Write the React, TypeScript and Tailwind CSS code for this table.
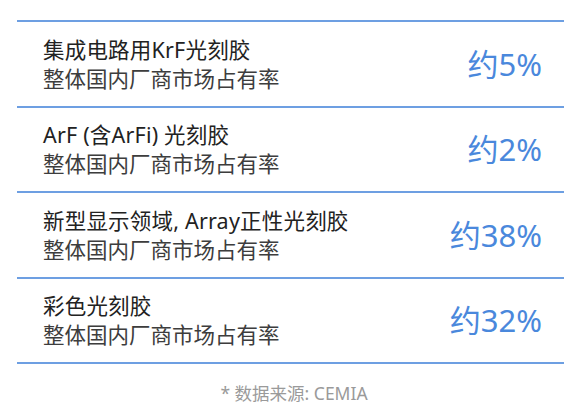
const rows = [
  { title: "集成电路用KrF光刻胶", value: "约5%" },
  { title: "ArF (含ArFi) 光刻胶", value: "约2%" },
  { title: "新型显示领域, Array正性光刻胶", value: "约38%" },
  { title: "彩色光刻胶", value: "约32%" },
];

export default function App() {
  return (
    <div
      className="w-[588px] h-[416px] bg-white pt-[20px]"
      style={{ fontFamily: '"Noto Sans", "Noto Sans CJK SC", sans-serif' }}
    >
      <div className="ml-[17px] w-[547px] border-b-2 border-[#6d9fe2]">
        {rows.map((row, idx) => (
          <div
            key={idx}
            className="h-[85.5px] border-t-2 border-[#6d9fe2] flex items-center justify-between pl-[26px] pr-[22px]"
          >
            <div className="flex flex-col">
              <span className="text-[21.5px] leading-[29px] text-[#222222] tracking-[0.2px]">{row.title}</span>
              <span className="text-[21.5px] leading-[29px] text-[#3d3d3d]">整体国内厂商市场占有率</span>
            </div>
            <span className="text-[31px] text-[#4a88dc]">{row.value}</span>
          </div>
        ))}
      </div>
      <p className="mt-[16px] text-center text-[17.5px] text-[#9a9a9a]">* 数据来源: CEMIA</p>
    </div>
  );
}
